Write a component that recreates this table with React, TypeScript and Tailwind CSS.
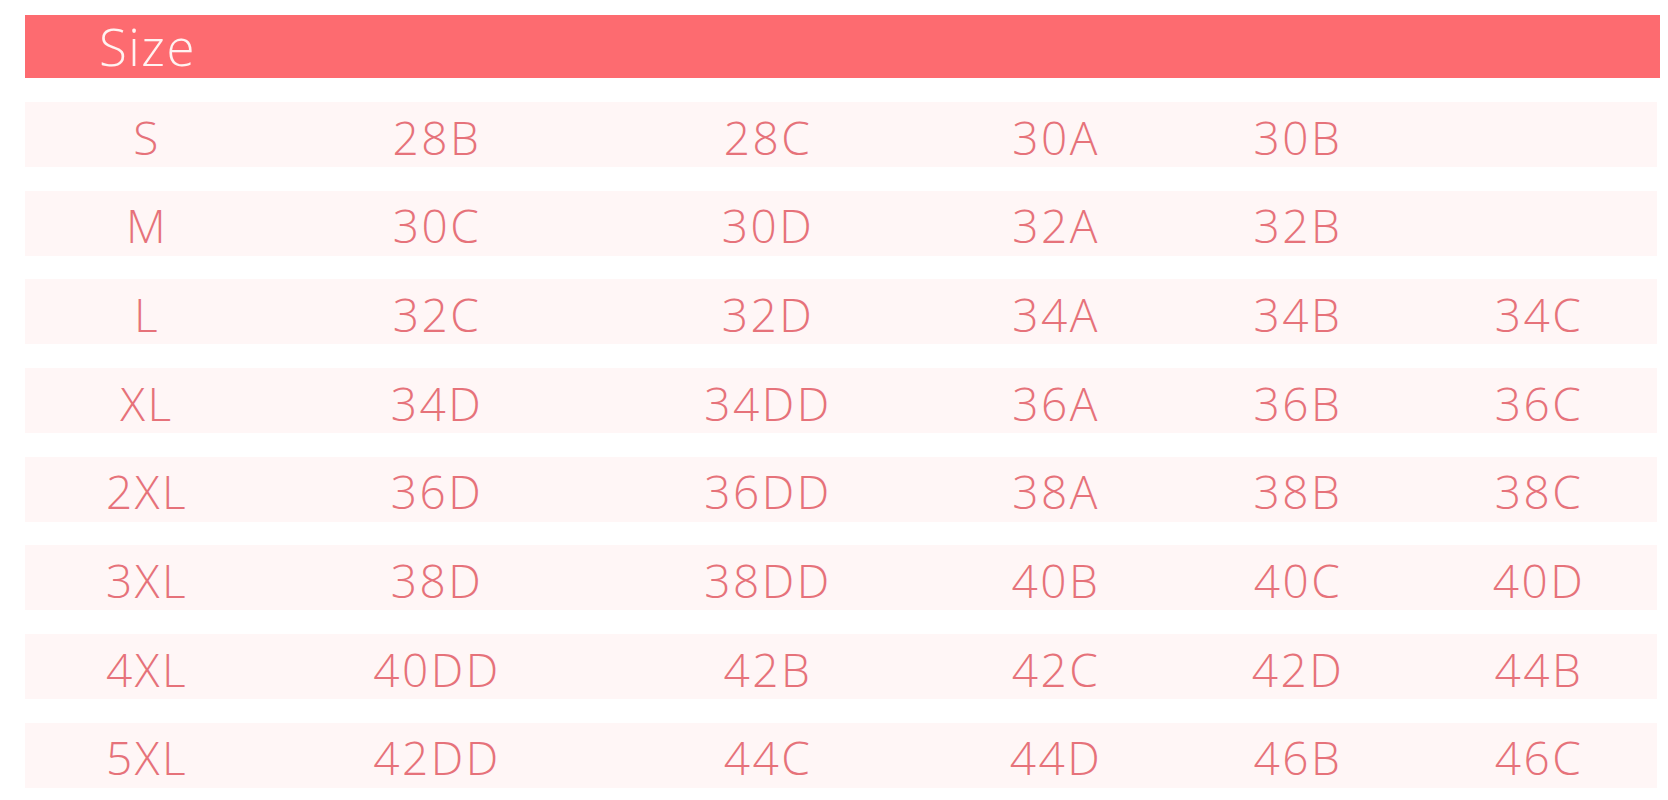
const rows: string[][] = [
  ['S', '28B', '28C', '30A', '30B', ''],
  ['M', '30C', '30D', '32A', '32B', ''],
  ['L', '32C', '32D', '34A', '34B', '34C'],
  ['XL', '34D', '34DD', '36A', '36B', '36C'],
  ['2XL', '36D', '36DD', '38A', '38B', '38C'],
  ['3XL', '38D', '38DD', '40B', '40C', '40D'],
  ['4XL', '40DD', '42B', '42C', '42D', '44B'],
  ['5XL', '42DD', '44C', '44D', '46B', '46C'],
];

export default function App() {
  return (
    <div
      className="w-[1668px] h-[800px] bg-white pt-[15px] pl-[25px] pr-[8px] font-[350]"
      style={{ fontFamily: '"Open Sans", "Liberation Sans", sans-serif' }}
    >
      <div className="h-[63px] bg-[#fd6b70] flex items-center pl-[74px] text-[51px] tracking-[1.5px] leading-none text-[#fff3f1]">
        Size
      </div>

      <div className="mt-[24px] flex flex-col gap-[23.7px] pr-[3px]">
        {rows.map(r => (
          <div
            key={r[0]}
            className="h-[65px] bg-[#fff6f6] grid grid-cols-[244px_336px_326px_250px_234px_1fr] items-center pt-[4px] text-[46px] tracking-[2.5px] leading-none text-[#e6727a]"
          >
            {r.map((c, i) => (
              <span key={i} className={i === 5 ? 'text-center pl-[6px]' : 'text-center'}>
                {c}
              </span>
            ))}
          </div>
        ))}
      </div>
    </div>
  );
}
